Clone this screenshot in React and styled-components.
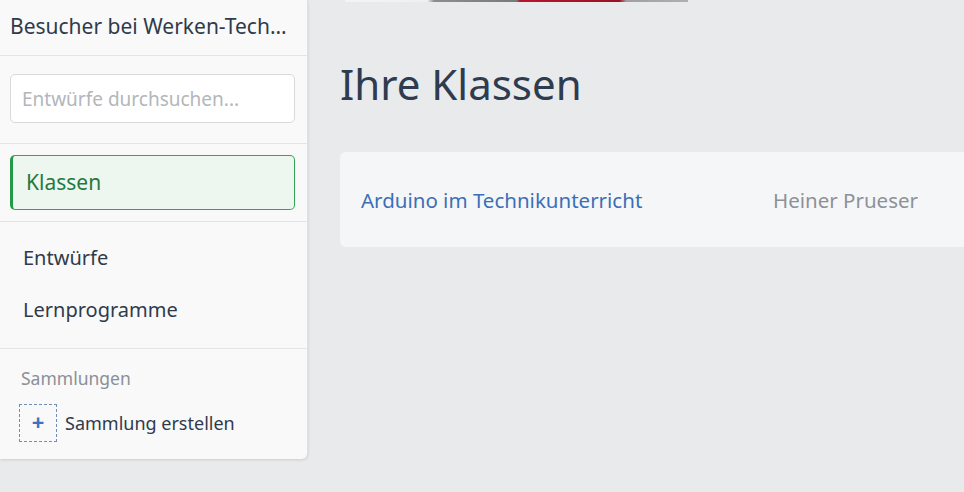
import styled, { createGlobalStyle } from 'styled-components';

const Global = createGlobalStyle`
  html, body {
    margin: 0;
    padding: 0;
    background: #e9eaec;
    font-family: "Noto Sans", "Open Sans", sans-serif;
    color: #2f3b4c;
  }
`;

const Page = styled.div`
  display: flex;
  align-items: flex-start;
  width: 964px;
  height: 492px;
  overflow: hidden;
`;

const Sidebar = styled.aside`
  width: 308px;
  flex: none;
  background: #f9f9f9;
  border-right: 1px solid #dfe0e2;
  border-bottom-right-radius: 6px;
  box-shadow: 0 1px 3px rgba(0, 0, 0, 0.12);
  box-sizing: border-box;
`;

const Section = styled.div`
  border-bottom: ${(p) => (p.last ? 'none' : '1px solid #e3e4e6')};
  padding: ${(p) => p.pad || '0'};
`;

const Owner = styled.div`
  height: 55px;
  line-height: 52px;
  padding: 0 11px 0 10px;
  font-size: 21px;
  white-space: nowrap;
  overflow: hidden;
  text-overflow: ellipsis;
  color: #2f3b4c;
`;

const Search = styled.input`
  width: 100%;
  height: 49px;
  box-sizing: border-box;
  border: 1px solid #d7d9dc;
  border-radius: 5px;
  background: #fff;
  padding: 0 11px;
  font-family: inherit;
  font-size: 19px;
  color: #2f3b4c;
  outline: none;

  &::placeholder {
    color: #b3b6bb;
  }
`;

const NavItem = styled.div`
  display: flex;
  align-items: center;
  height: ${(p) => (p.active ? '55px' : '52px')};
  box-sizing: border-box;
  padding-left: 13px;
  padding-bottom: ${(p) => (p.active ? '2px' : '0')};
  font-size: ${(p) => (p.active ? '21px' : '20px')};
  color: ${(p) => (p.active ? '#1f7a3d' : '#2f3b4c')};
  background: ${(p) => (p.active ? '#edf6ef' : 'transparent')};
  border: ${(p) => (p.active ? '1px solid #35a357' : 'none')};
  border-left: ${(p) => (p.active ? '3px solid #23994a' : 'none')};
  border-radius: ${(p) => (p.active ? '5px' : '0')};
`;

const Caption = styled.div`
  font-size: 17.5px;
  color: #8b9097;
  padding-left: 11px;
  margin-bottom: 14px;
`;

const AddRow = styled.div`
  display: flex;
  align-items: center;
  gap: 8px;
  padding-left: 9px;
  font-size: 18px;
  color: #2f3b4c;
`;

const AddBox = styled.div`
  width: 38px;
  height: 38px;
  box-sizing: border-box;
  border: 1px dashed #6f8fb7;
  display: flex;
  align-items: flex-start;
  justify-content: center;
  padding-top: 7px;
  color: #3b73c4;
  font-size: 22px;
  font-weight: 700;
  line-height: 18px;
`;

const Main = styled.main`
  flex: 1;
  padding-left: 32px;
  min-width: 0;
`;

const Banner = styled.div`
  margin-left: 5px;
  width: 343px;
  height: 2px;
  background: linear-gradient(
    90deg,
    #f4f4f4 0%,
    #f0f0f0 24%,
    #8d8d8d 26%,
    #7a7a7a 50%,
    #b5172c 51%,
    #9a1224 80%,
    #a0a0a0 82%,
    #b0b0b0 100%
  );
`;

const Heading = styled.h1`
  margin: 54px 0 0 0;
  font-size: 42px;
  font-weight: 400;
  line-height: 56px;
  color: #2e3c4f;
`;

const ClassCard = styled.div`
  margin-top: 40px;
  height: 95px;
  background: #f5f6f8;
  border-radius: 6px 0 0 6px;
  display: flex;
  align-items: center;
  padding-left: 21px;
  font-size: 20.5px;
`;

const ClassName = styled.a`
  width: 412px;
  color: #3c6fb7;
  text-decoration: none;
`;

const Teacher = styled.span`
  color: #8d9198;
`;

export default function App() {
  return (
    <>
      <Global />
      <Page>
        <Sidebar>
          <Section>
            <Owner>Besucher bei Werken-Technik</Owner>
          </Section>
          <Section pad="18px 12px 20px 10px">
            <Search placeholder="Entwürfe durchsuchen..." />
          </Section>
          <Section pad="11px 12px 11px 10px">
            <NavItem active>Klassen</NavItem>
          </Section>
          <Section pad="9px 0 13px 10px">
            <NavItem>Entwürfe</NavItem>
            <NavItem>Lernprogramme</NavItem>
          </Section>
          <Section last pad="17px 0 17px 10px">
            <Caption>Sammlungen</Caption>
            <AddRow>
              <AddBox>+</AddBox>
              Sammlung erstellen
            </AddRow>
          </Section>
        </Sidebar>
        <Main>
          <Banner />
          <Heading>Ihre Klassen</Heading>
          <ClassCard>
            <ClassName href="#">Arduino im Technikunterricht</ClassName>
            <Teacher>Heiner Prueser</Teacher>
          </ClassCard>
        </Main>
      </Page>
    </>
  );
}
